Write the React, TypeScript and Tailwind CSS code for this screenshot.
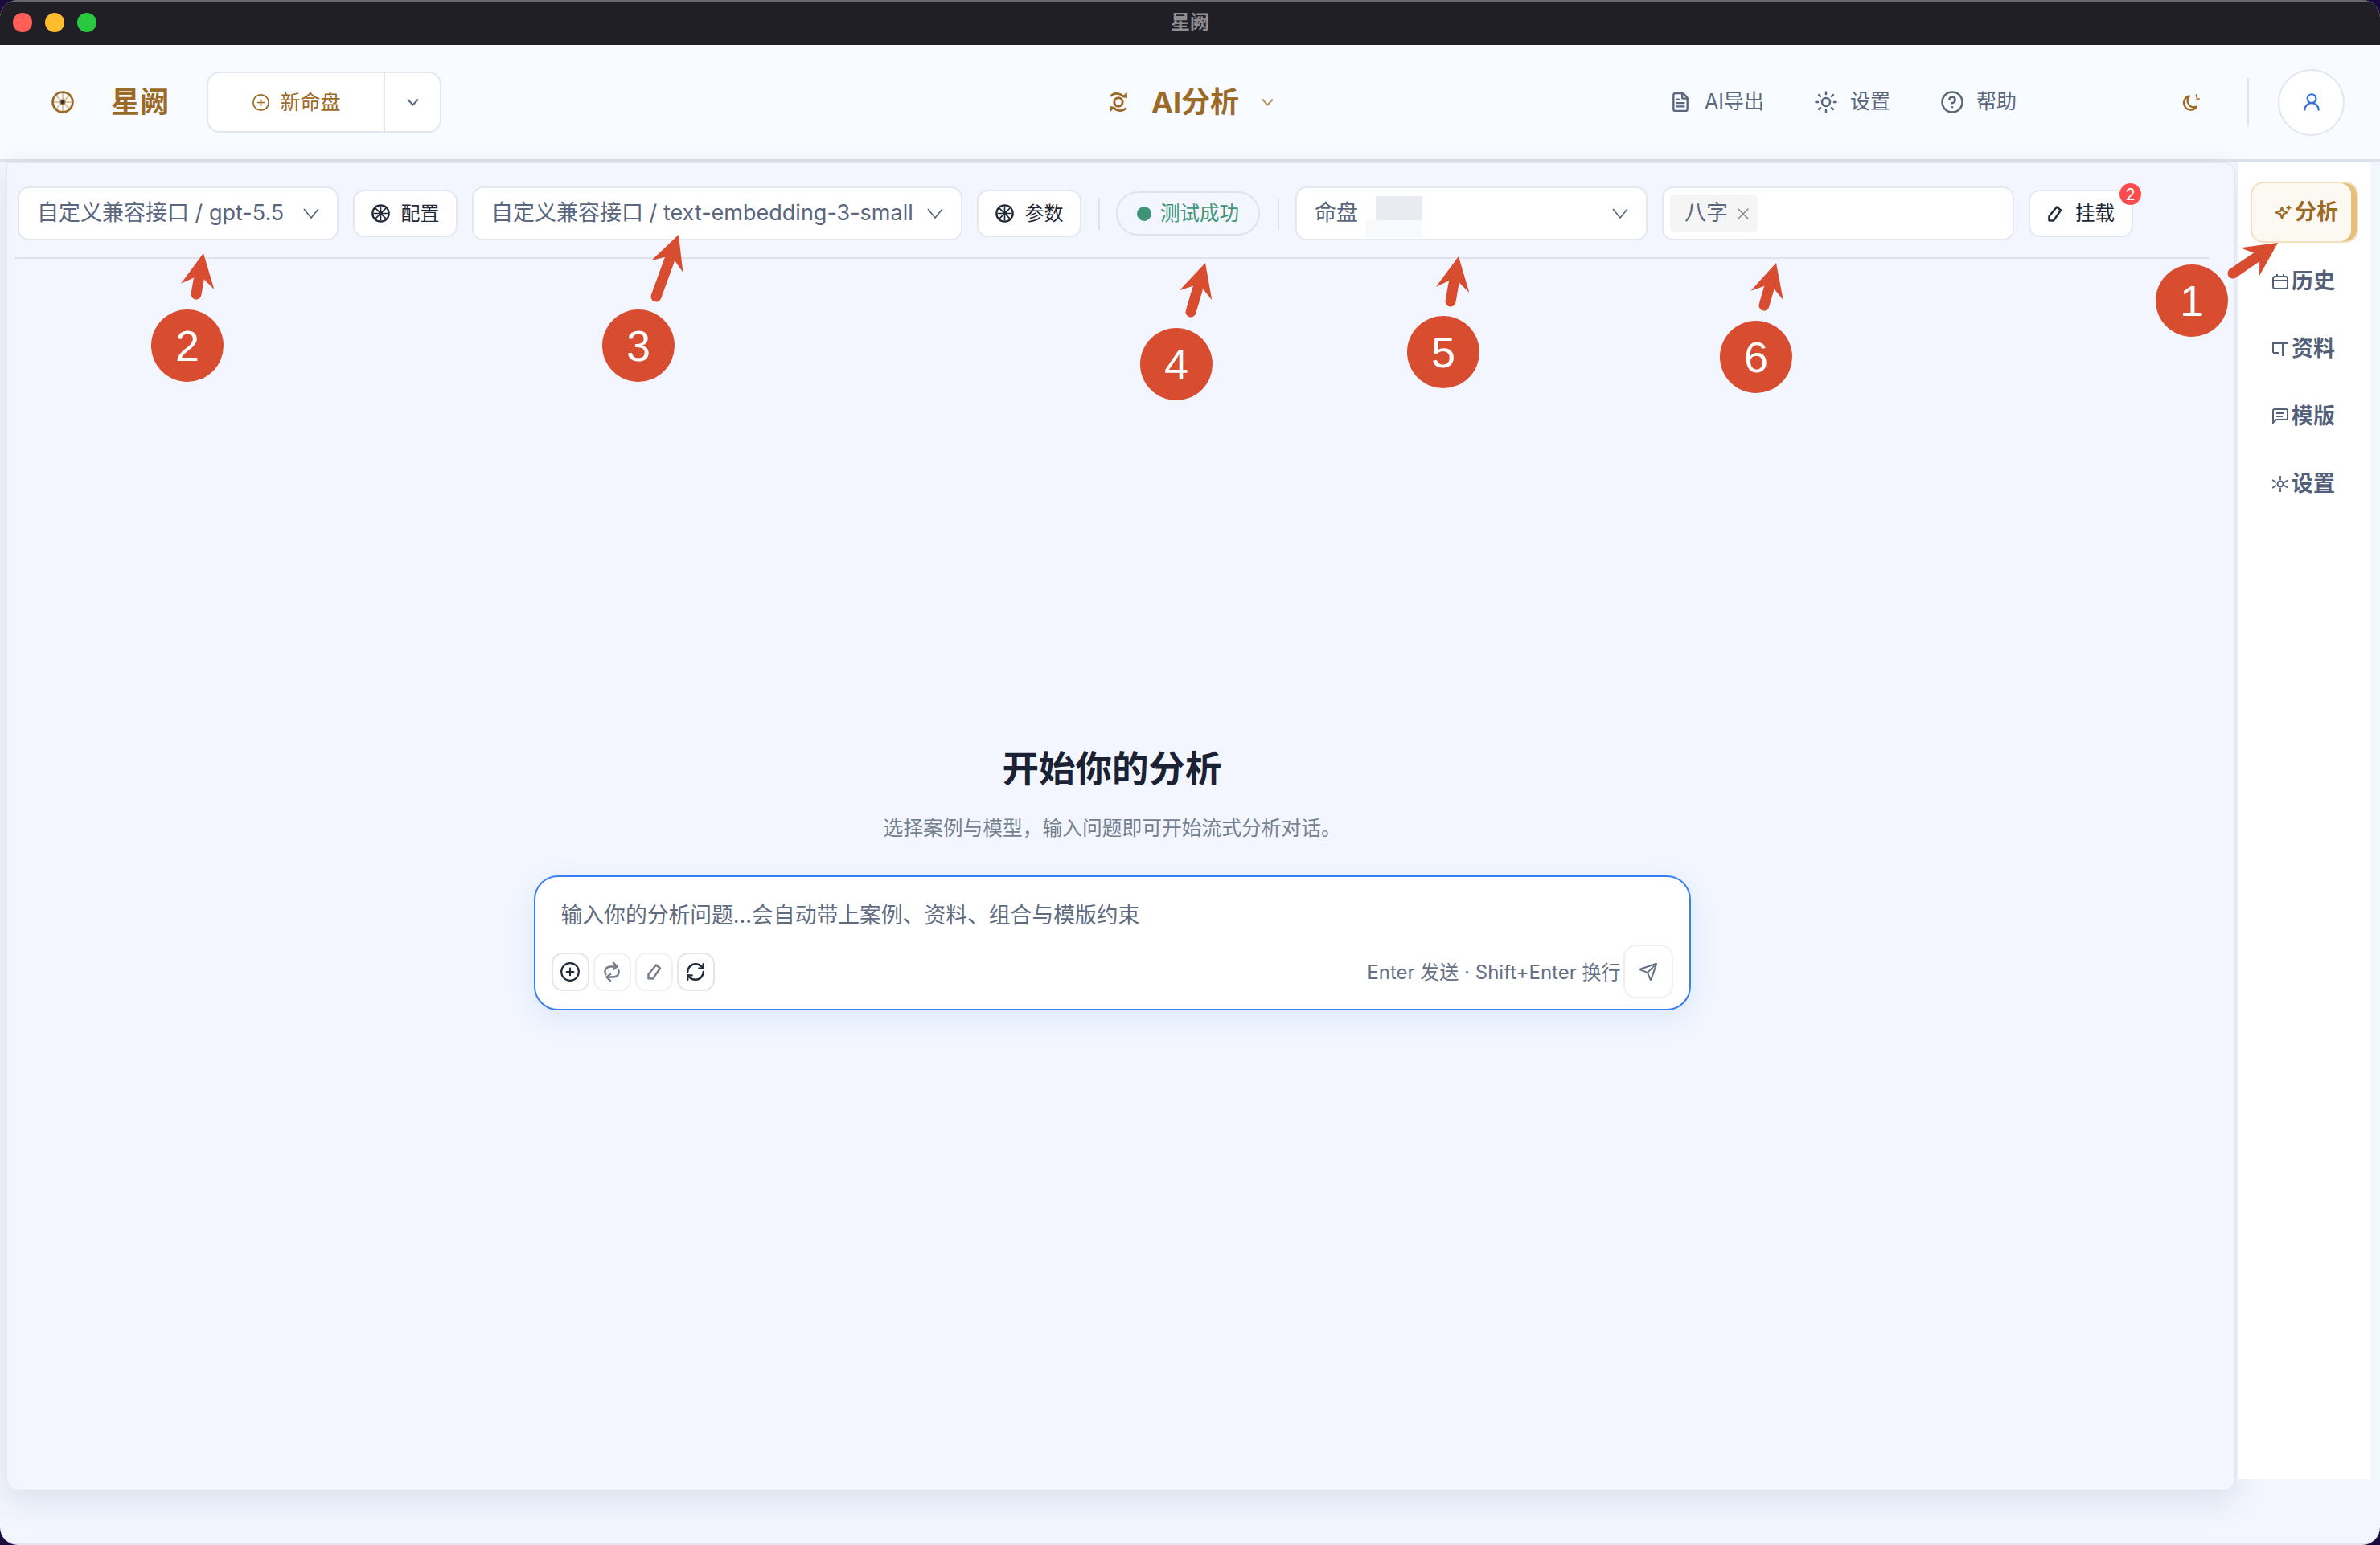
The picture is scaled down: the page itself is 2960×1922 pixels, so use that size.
import React from "react";
import {CirclePlus, CircleHelp, FileText, RefreshCw, Send, Sun, UserRound, X} from "lucide-react";

const Wheel: React.FC<{ring: string; spoke: string; hub: string; size: number; hubSize?: number}> = ({ring, spoke, hub, size, hubSize = 3.4}) => (
    <svg width={size} height={size} viewBox="0 0 28 28" fill="none" className="shrink-0">
        <g stroke={spoke} strokeWidth="2">
            <path d="M14 3v22M3 14h22M6.200 6.200l15.600 15.600M21.800 6.200 6.200 21.800"/>
        </g>
        <circle cx="14" cy="14" r="12.400" stroke={ring} strokeWidth="2.800"/>
        <circle cx="14" cy="14" r={hubSize} fill={hub} stroke={ring} strokeWidth="1.200"/>
    </svg>
);

const Chevron: React.FC = () => (
    <svg width="20" height="13" viewBox="0 0 20 13" fill="none" className="shrink-0">
        <path d="M1 1l9 11 9-11" stroke="#5a667d" strokeWidth="1.700"/>
    </svg>
);

const SmallChevron: React.FC<{color: string}> = ({color}) => (
    <svg width="15" height="10" viewBox="0 0 15 10" fill="none" className="shrink-0">
        <path d="M1 1.500l6.500 7 6.500-7" stroke={color} strokeWidth="2"/>
    </svg>
);

const SwirlIcon: React.FC = () => (
    <svg width="24" height="28" viewBox="0 0 24 28" fill="none" className="shrink-0">
        <circle cx="12" cy="14" r="5.200" stroke="#9c6a27" strokeWidth="3"/>
        <path d="M3 6c4-3.600 10-3.600 15 .6" stroke="#9c6a27" strokeWidth="3" strokeLinecap="round"/>
        <path d="M21 22c-4 3.600-10 3.600-15-.6" stroke="#9c6a27" strokeWidth="3" strokeLinecap="round"/>
        <path d="M22.500 1.500l.5 7.500-7-1z" fill="#9c6a27"/>
        <path d="M1.500 26.500l-.5-7.500 7 1z" fill="#9c6a27"/>
    </svg>
);

const MoonIcon: React.FC = () => (
    <svg width="23" height="21" viewBox="0 0 23 21" fill="none" className="shrink-0">
        <path d="M10 2.500a8.600 8.600 0 1 0 9 13 8 8 0 0 1-9-13z" stroke="#9c6a27" strokeWidth="2.400" strokeLinejoin="round"/>
        <path d="M18.500 1l1 4M22 6l-3 1" stroke="#9c6a27" strokeWidth="1.800" strokeLinecap="round"/>
    </svg>
);

const PenIcon: React.FC<{color: string}> = ({color}) => (
    <svg width="19" height="22" viewBox="0 0 19 22" fill="none" className="shrink-0">
        <path d="M12 2.500l5 4L8 19.500l-5.600-.2L2.500 14z" stroke={color} strokeWidth="2.400" strokeLinejoin="round"/>
    </svg>
);

const LoopIcon: React.FC = () => (
    <svg width="24" height="26" viewBox="0 0 20 22" fill="none" className="shrink-0">
        <path d="M4 14.500C1 10 3.500 5.500 9 5.500h7" stroke="#767c88" strokeWidth="2"/>
        <path d="M16 7.500c3 4.500.5 9-5 9H4" stroke="#767c88" strokeWidth="2"/>
        <path d="M11 1l4.500 4.500L11 9M9 13l-4.500 3.500L9 21" stroke="#767c88" strokeWidth="2"/>
    </svg>
);

const StarIcon: React.FC = () => (
    <svg width="22" height="20" viewBox="0 0 22 20" fill="none" className="shrink-0">
        <path d="M9 4l1.800 4.700L15.500 10.500l-4.700 1.800L9 18l-1.800-5.700L1.500 10.500l5.700-1.800z" stroke="#9c6a27" strokeWidth="2.200" strokeLinejoin="round"/>
        <path d="M17.500 1.500v6M14.500 4.500h6" stroke="#9c6a27" strokeWidth="1.800"/>
    </svg>
);

const RailCalendar: React.FC = () => (
    <svg width="20" height="19" viewBox="0 0 20 19" fill="none" className="shrink-0">
        <rect x="1" y="3" width="18" height="15" rx="2.500" stroke="#526079" strokeWidth="2"/>
        <path d="M1 8h18M6 0v4M14 0v4" stroke="#526079" strokeWidth="2"/>
    </svg>
);

const RailBook: React.FC = () => (
    <svg width="20" height="19" viewBox="0 0 20 19" fill="none" className="shrink-0">
        <path d="M1 14V2h18M1 14h7M13 2v16" stroke="#526079" strokeWidth="2"/>
    </svg>
);

const RailMessage: React.FC = () => (
    <svg width="20" height="20" viewBox="0 0 20 20" fill="none" className="shrink-0">
        <path d="M1 18V3a2 2 0 0 1 2-2h14a2 2 0 0 1 2 2v9a2 2 0 0 1-2 2H5z" stroke="#526079" strokeWidth="2"/>
        <path d="M5 6h10M5 10h8" stroke="#526079" strokeWidth="2"/>
    </svg>
);

const RailGear: React.FC = () => (
    <svg width="20" height="20" viewBox="0 0 20 20" fill="none" className="shrink-0">
        <circle cx="10" cy="10" r="3.500" stroke="#526079" strokeWidth="2"/>
        <path d="M10 0v5M10 15v5M0 5l5 3M15 12l5 3M0 15l5-3M15 8l5-3" stroke="#526079" strokeWidth="1.800"/>
    </svg>
);

const ToolButton: React.FC<{label: string}> = ({label}) => (
    <div className="flex items-center justify-center gap-[14px] w-[130px] h-[59px] bg-white border-2 border-[#e5e8ef] rounded-[14px] text-[24px] text-[#1f2937]">
        <Wheel ring="#1f2937" spoke="#1f2937" hub="#1f2937" size={23} hubSize={2.200}/>
        {label}
    </div>
);

const SelectBox: React.FC<{text: string; width: string}> = ({text, width}) => (
    <div className={`flex items-center justify-between pl-[22px] pr-[22px] h-[67px] bg-white border-2 border-[#e5e8ef] rounded-[14px] text-[27px] text-[#5a667d] ${width}`}>
        <span className="whitespace-nowrap">{text}</span>
        <Chevron/>
    </div>
);

const Divider: React.FC<{extra: string}> = ({extra}) => (
    <div className={`w-[2px] h-[40px] bg-[#dde2ec] ${extra}`}/>
);

const RailItem: React.FC<{icon: React.ReactNode; label: string}> = ({icon, label}) => (
    <div className="flex items-center gap-[4px] pl-[42px] w-full h-[76px] text-[27px] font-semibold text-[#526079]">
        {icon}
        <span>{label}</span>
    </div>
);

const SquareButton: React.FC<{children: React.ReactNode; faint?: boolean}> = ({children, faint}) => (
    <div className={`flex items-center justify-center w-[47px] h-[48px] rounded-[14px] border-2 bg-white ${faint ? "border-[#eef0f4]" : "border-[#e2e5ec]"}`}>
        {children}
    </div>
);

const marks = [
    {n: "1", cx: 2726, cy: 374, tail: [2777, 340], tip: [2833, 302]},
    {n: "2", cx: 233, cy: 430, tail: [244, 366], tip: [253, 315]},
    {n: "3", cx: 794, cy: 430, tail: [816, 369], tip: [844, 292]},
    {n: "4", cx: 1463, cy: 453, tail: [1481, 388], tip: [1499, 327]},
    {n: "5", cx: 1795, cy: 438, tail: [1804, 375], tip: [1814, 319]},
    {n: "6", cx: 2184, cy: 444, tail: [2194, 380], tip: [2209, 327]},
];

// arrow head points from the tip backwards along the shaft
const headPoints = (tail: number[], tip: number[]) => {
    const dx = tip[0] - tail[0];
    const dy = tip[1] - tail[1];
    const len = Math.hypot(dx, dy);
    const ux = dx / len;
    const uy = dy / len;
    const at = (back: number, side: number) =>
        `${tip[0] - ux * back - uy * side},${tip[1] - uy * back + ux * side}`;
    return [at(0, 0), at(42, 21), at(32, 6.500), at(32, -6.500), at(42, -21)].join(" ");
};

const Annotations: React.FC = () => (
    <svg className="absolute inset-0 pointer-events-none" width="2960" height="1922" viewBox="0 0 2960 1922">
        {marks.map((m) => (
            <g key={m.n}>
                <line x1={m.tail[0]} y1={m.tail[1]} x2={m.tip[0]} y2={m.tip[1]} stroke="#d84c2f" strokeWidth="13" strokeLinecap="round" strokeDasharray={`${Math.hypot(m.tip[0] - m.tail[0], m.tip[1] - m.tail[1]) - 34} 999`}/>
                <polygon points={headPoints(m.tail, m.tip)} fill="#d84c2f"/>
                <circle cx={m.cx} cy={m.cy} r="45" fill="#d84c2f"/>
                <text x={m.cx} y={m.cy + 19} textAnchor="middle" fill="#ffffff" fontSize="54" fontFamily="Liberation Sans, sans-serif">{m.n}</text>
            </g>
        ))}
    </svg>
);

const App: React.FC = () => {
    return (
        <div className="relative w-[2960px] h-[1922px] overflow-hidden bg-[#1b0a3f] font-['Inter','Noto_Sans_CJK_SC',sans-serif]">
            <div className="flex flex-col h-full rounded-[22px] overflow-hidden bg-[#f3f6fe] border-b-2 border-[#e3e6f0]">
                {/* title bar */}
                <div className="relative flex items-center justify-center h-[56px] shrink-0 bg-[#211f26] border-t-2 border-[#68676c]">
                    <div className="absolute left-[16px] top-[14px] flex gap-[16px]">
                        <div className="w-[24px] h-[24px] rounded-full bg-[#ff5f57]"/>
                        <div className="w-[24px] h-[24px] rounded-full bg-[#febc2e]"/>
                        <div className="w-[24px] h-[24px] rounded-full bg-[#28c840]"/>
                    </div>
                    <span className="text-[24px] font-semibold text-[#8e8d91] -translate-y-[1px]">星阙</span>
                </div>

                {/* header */}
                <div className="flex items-center h-[146px] shrink-0 bg-[#f8fbff] border-b-4 border-[#dfe2ea]">
                    <div className="ml-[64px]">
                        <Wheel ring="#9c6a27" spoke="#dcc4a2" hub="#33333f" size={28} hubSize={2.800}/>
                    </div>
                    <span className="ml-[46px] text-[36px] font-bold text-[#9c6a27] leading-none">星阙</span>
                    <div className="flex ml-[47px] w-[292px] h-[76px] bg-white border-2 border-[#e3e6ee] rounded-[16px]">
                        <div className="flex items-center justify-center gap-[13px] w-[220px] pt-[1px] border-r-2 border-[#e3e6ee] text-[25px] text-[#9c6a27]">
                            <CirclePlus size={23} strokeWidth={1.800}/>
                            新命盘
                        </div>
                        <div className="flex flex-1 items-center justify-center">
                            <SmallChevron color="#5a667d"/>
                        </div>
                    </div>
                    <div className="ml-[830px] flex items-center">
                        <SwirlIcon/>
                        <span className="ml-[29px] text-[36px] font-bold text-[#9c6a27]">AI分析</span>
                        <div className="ml-[28px] opacity-70">
                            <SmallChevron color="#9c6a27"/>
                        </div>
                    </div>
                    <div className="ml-[493px] flex items-center text-[25px] text-[#5a667d]">
                        <FileText size={26} strokeWidth={2.200}/>
                        <span className="ml-[17px]">AI导出</span>
                        <Sun size={30} strokeWidth={2} className="ml-[62px]"/>
                        <span className="ml-[15px]">设置</span>
                        <CircleHelp size={30} strokeWidth={2} className="ml-[62px]"/>
                        <span className="ml-[15px]">帮助</span>
                    </div>
                    <div className="ml-[205px]">
                        <MoonIcon/>
                    </div>
                    <div className="ml-[59px] w-[2px] h-[60px] bg-[#e3e6ee]"/>
                    <div className="ml-[36px] flex items-center justify-center w-[83px] h-[83px] rounded-full bg-white border-2 border-[#e3e6ee]">
                        <UserRound size={26} strokeWidth={2} className="text-[#2f6fde]"/>
                    </div>
                </div>

                {/* body */}
                <div className="flex flex-1 min-h-0">
                    <div className="flex flex-col ml-[8px] mb-[66px] w-[2772px] rounded-b-[14px] rounded-tr-[14px] border border-[#e3e6ee] bg-[#f3f6fe] shadow-[0_12px_40px_rgba(40,60,100,0.12)]">
                        {/* toolbar */}
                        <div className="flex items-center gap-[18px] h-[119px] pt-[8px] ml-[9px] mr-[31px] pl-[4px] border-b-2 border-[#dde2ec] shrink-0">
                            <SelectBox text="自定义兼容接口 / gpt-5.5" width="w-[399px]"/>
                            <ToolButton label="配置"/>
                            <SelectBox text="自定义兼容接口 / text-embedding-3-small" width="w-[610px]"/>
                            <ToolButton label="参数"/>
                            <Divider extra="ml-[3px]"/>
                            <div className="flex items-center justify-center gap-[11px] ml-[2px] w-[179px] h-[55px] rounded-full border-2 border-[#dde2ec] text-[24.500px] text-[#3f9477]">
                                <div className="w-[18px] h-[18px] rounded-full bg-[#3f9477]"/>
                                测试成功
                            </div>
                            <Divider extra="ml-[4px]"/>
                            <div className="flex items-center justify-between ml-[2px] pl-[22px] pr-[22px] w-[438px] h-[67px] bg-white border-2 border-[#e5e8ef] rounded-[14px] text-[27px] text-[#5a667d]">
                                <div className="flex items-center">
                                    <span>命盘</span>
                                    <div className="flex flex-col ml-[10px] w-[70px] h-[60px]">
                                        <div className="ml-[12px] mt-[8px] h-[30px] bg-[#e9ebf0]"/>
                                        <div className="flex-1 bg-[#f8f9fb]"/>
                                    </div>
                                </div>
                                <Chevron/>
                            </div>
                            <div className="flex items-center pl-[8px] w-[438px] h-[67px] bg-white border-2 border-[#e5e8ef] rounded-[14px]">
                                <div className="flex items-center gap-[7px] pl-[18px] w-[109px] h-[47px] bg-[#f5f5f5] rounded-[6px] text-[27px] text-[#5a667d]">
                                    八字
                                    <X size={24} strokeWidth={1.500} className="text-[#85888f]"/>
                                </div>
                            </div>
                            <div className="relative flex items-center justify-center gap-[16px] w-[130px] h-[59px] bg-white border-2 border-[#e5e8ef] rounded-[14px] text-[24.500px] text-[#1f2937]">
                                <PenIcon color="#1f2937"/>
                                挂载
                                <div className="absolute -top-[10px] -right-[12px] flex items-center justify-center w-[27px] h-[27px] rounded-full bg-[#ff4d4f] text-[20px] text-white leading-none">2</div>
                            </div>
                        </div>

                        {/* empty state */}
                        <div className="flex flex-col items-center flex-1 ml-[9px] mr-[31px] pt-[605px]">
                            <h1 className="text-[45.500px] leading-[60px] font-semibold text-[#1a2233]">开始你的分析</h1>
                            <p className="mt-[25px] text-[24.750px] leading-[36px] text-[#74808f]">选择案例与模型，输入问题即可开始流式分析对话。</p>
                            <div className="flex flex-col mt-[41px] w-[1439px] h-[168px] px-[20px] pb-[13px] bg-white border-2 border-[#3a7ff0] rounded-[30px] shadow-[0_10px_34px_rgba(59,120,240,0.12)]">
                                <div className="ml-[12px] mt-[29px] text-[26.800px] leading-[36px] text-[#5f6b80]">输入你的分析问题...会自动带上案例、资料、组合与模版约束</div>
                                <div className="flex items-center justify-between mt-auto h-[67px]">
                                    <div className="flex gap-[5px]">
                                        <SquareButton><CirclePlus size={26} strokeWidth={2} className="text-[#1f2937]"/></SquareButton>
                                        <SquareButton faint><LoopIcon/></SquareButton>
                                        <SquareButton faint><PenIcon color="#767c88"/></SquareButton>
                                        <SquareButton><RefreshCw size={26} strokeWidth={2.200} className="text-[#1f2937]"/></SquareButton>
                                    </div>
                                    <div className="flex items-center gap-[3px]">
                                        <span className="pt-[2px] text-[24px] text-[#667085]">Enter 发送 · Shift+Enter 换行</span>
                                        <div className="flex items-center justify-center w-[62px] h-[67px] rounded-[16px] border-2 border-[#eef0f4] bg-white">
                                            <Send size={24} strokeWidth={2} className="text-[#667085]"/>
                                        </div>
                                    </div>
                                </div>
                            </div>
                        </div>
                    </div>

                    {/* right rail */}
                    <div className="flex flex-col items-center gap-[8px] ml-[2px] mb-[80px] pt-[24px] w-[166px] bg-white border-l-2 border-[#eceef3]">
                        <div className="flex items-center gap-[3px] w-[134px] h-[76px] mb-[2px] pl-[28px] rounded-[16px] border-2 border-[#f2e0c1] bg-[#fcf8f2] shadow-[inset_-7px_0_0_#e8bf7a] text-[27px] font-semibold text-[#9c6a27]">
                            <StarIcon/>
                            <span>分析</span>
                        </div>
                        <RailItem icon={<RailCalendar/>} label="历史"/>
                        <RailItem icon={<RailBook/>} label="资料"/>
                        <RailItem icon={<RailMessage/>} label="模版"/>
                        <RailItem icon={<RailGear/>} label="设置"/>
                    </div>
                </div>
            </div>
            <Annotations/>
        </div>
    );
};

export default App;
